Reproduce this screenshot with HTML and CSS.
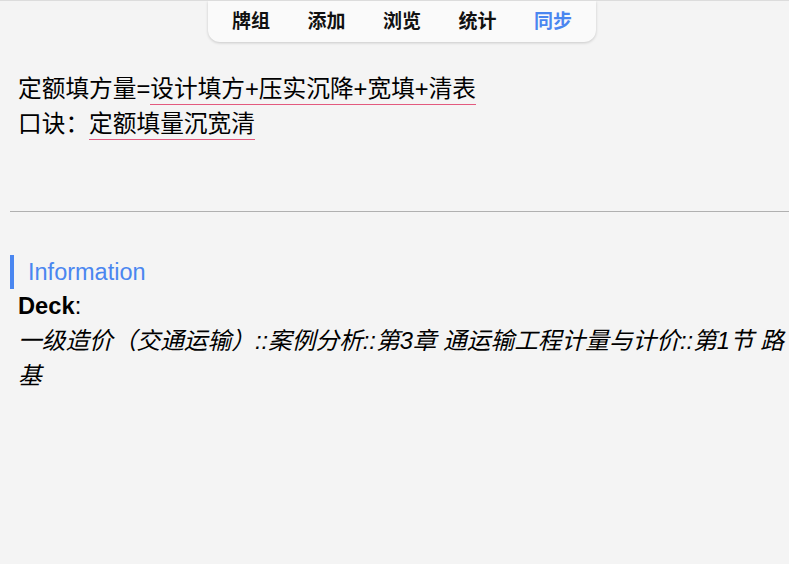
FILE: index.html
```html
<!DOCTYPE html>
<html lang="zh-CN">
<head>
    <meta charset="UTF-8">
    <meta name="viewport" content="width=device-width, initial-scale=1.0">
    <title>卡片</title>
    <link rel="stylesheet" href="styles.css">
</head>
<body>
    <div id="topbar">
        <div id="nav">
            <a href="javascript:void(0)">牌组</a>
            <a href="javascript:void(0)">添加</a>
            <a href="javascript:void(0)">浏览</a>
            <a href="javascript:void(0)">统计</a>
            <a href="javascript:void(0)" class="sync">同步</a>
        </div>
    </div>

    <div id="card">
        <div class="answer">
            定额填方量=<span class="cloze">设计填方+压实沉降+宽填+清表</span><br>
            口诀：<span class="cloze">定额填量沉宽清</span>
        </div>

        <hr class="sep">

        <div class="info">
            <h2 class="info-title">Information</h2>
            <div class="info-row"><b>Deck</b>:</div>
            <div class="deck">一级造价（交通运输）::案例分析::第3章 通运输工程计量与计价::第1节 路基</div>
        </div>
    </div>
</body>
</html>
```

FILE: styles.css
```css
* {
    margin: 0;
    padding: 0;
    text-decoration: none;
}

body {
    background-color: #f4f4f4;
    border-top: 1px solid #dcdcdc;
    font-family: "Liberation Sans", "Noto Sans CJK SC", sans-serif;
    font-size: 23.7px;
    line-height: 35px;
    color: #000;
}

#topbar {
    display: flex;
    justify-content: center;
    padding-left: 15px;
}

#nav {
    display: flex;
    gap: 37.5px;
    align-items: center;
    height: 41px;
    padding: 0 24px;
    background-color: #fafafa;
    border-radius: 0 0 12px 12px;
    box-shadow: 0 1px 3px rgba(0, 0, 0, .18);
}

#nav a {
    font-size: 19px;
    font-weight: bold;
    color: #111;
}

#nav .sync {
    color: #4a86f0;
}

#card {
    padding: 30px 0 0 18px;
}

.cloze {
    border-bottom: 1px solid #e35a7e;
    padding-bottom: 2px;
}

.sep {
    margin: 69px 0 0 -8px;
    border: none;
    border-top: 1px solid #b0b0b0;
}

.info {
    margin-top: 43px;
}

.info-title {
    margin-left: -8px;
    padding-left: 14px;
    border-left: 4px solid #4a86f0;
    font-size: 23.5px;
    font-weight: normal;
    line-height: 34px;
    color: #4a86f0;
}

.info-row b {
    font-weight: bold;
}

.deck {
    font-style: italic;
}
```
